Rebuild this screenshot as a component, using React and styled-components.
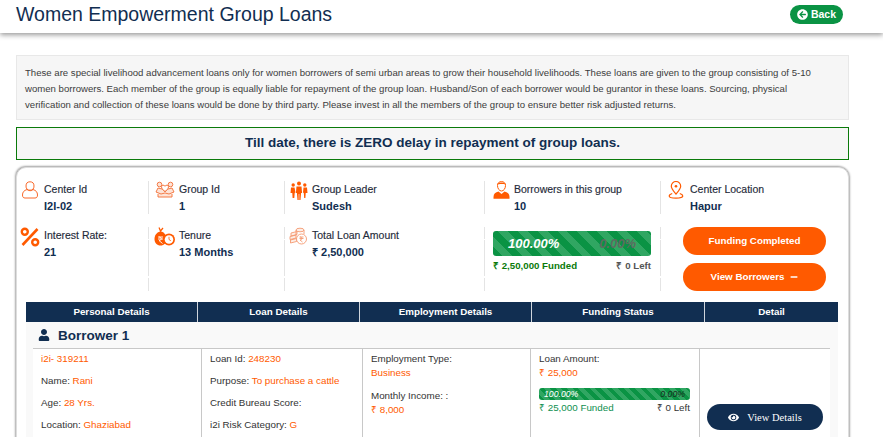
import React from 'react';
import styled, { createGlobalStyle } from 'styled-components';
import { FaArrowCircleLeft, FaUser, FaEye, FaMinus } from 'react-icons/fa';

const navy = '#112e51';
const orange = '#ff5a00';
const font = '"Liberation Sans", Arial, sans-serif';

const GlobalStyle = createGlobalStyle`
  html, body {
    margin: 0;
    height: 437px;
    overflow: hidden;
    background: #fff;
    font-family: ${font};
  }
`;

const Header = styled.header`
  display: flex;
  align-items: center;
  justify-content: space-between;
  height: 33px;
  padding: 0 40px 0 16px;
  background: #fff;
  box-shadow: 0 2px 5px rgba(0, 0, 0, 0.4);
`;
const Title = styled.h1`
  margin: 0 0 5px;
  font-size: 19.5px;
  font-weight: 400;
  color: ${navy};
  line-height: 28px;
`;
const BackButton = styled.a`
  display: flex;
  align-items: center;
  justify-content: center;
  gap: 3px;
  width: 53px;
  height: 19px;
  margin-bottom: 5px;
  border-radius: 10px;
  background: #0a9344;
  color: #fff;
  font-size: 10.5px;
  font-weight: 700;
`;
const Main = styled.main`
  padding: 22px 34px 0 16px;
`;
const Intro = styled.p`
  margin: 0;
  height: 65px;
  box-sizing: border-box;
  padding: 9px 16px 9px 8px;
  border: 1px solid #e8e8e8;
  background: #f6f6f6;
  color: #3c3c3c;
  font-size: 9.6px;
  line-height: 16px;
`;
const Notice = styled.div`
  margin-top: 7px;
  height: 33px;
  box-sizing: border-box;
  border: 1px solid #0a7a0a;
  background: #f6f6f6;
  color: ${navy};
  font-size: 13.5px;
  font-weight: 700;
  line-height: 30px;
  text-align: center;
`;
const Card = styled.section`
  margin-top: 7px;
  padding: 13px 10px 0;
  height: 300px;
  border: 1px solid #ddd;
  border-radius: 10px;
  background: #fff;
  box-shadow: -1px -1px 2px #aaa, 1px 0 2px #aaa;
`;
const InfoGrid = styled.div`
  display: grid;
  grid-template-columns: 132px 136px 200px 176px 1fr;
  grid-template-rows: 33px 64px;
  row-gap: 13px;
  margin-left: -10px;
`;
const sepGaps = `
  border-right: 1px solid #e4e4e4;
  border-image: linear-gradient(
    #e4e4e4 0 13px, transparent 13px 14px,
    #e4e4e4 14px 48px, transparent 48px 50px,
    #e4e4e4 50px
  ) 1;
`;
const Info = styled.div`
  display: flex;
  padding-left: ${p => p.$pad}px;
  border-right: ${p => (p.$last ? 'none' : '1px solid #e4e4e4')};
  ${p => (p.$gaps ? sepGaps : '')}
`;
const IconBox = styled.span`
  flex: none;
  width: ${p => p.$w}px;
  height: 24px;
  display: flex;
  align-items: flex-start;
`;
const InfoText = styled.div`
  padding-top: 1px;
`;
const InfoLabel = styled.div`
  font-size: 10.5px;
  line-height: 14px;
  color: #1f2b3a;
  -webkit-text-stroke: 0.15px #1f2b3a;
`;
const InfoValue = styled.div`
  margin-top: 3px;
  font-size: 11px;
  line-height: 14px;
  font-weight: 700;
  color: ${navy};
`;
const FundCell = styled.div`
  padding: 4px 9px 0 8px;
  ${sepGaps}
`;
const Bar = styled.div`
  display: flex;
  align-items: center;
  justify-content: space-between;
  height: ${p => p.$h}px;
  border-radius: ${p => p.$r}px;
  padding: 0 ${p => p.$pad}px;
  font-style: italic;
  background: repeating-linear-gradient(
    45deg,
    #0a9344 0,
    #0a9344 ${p => p.$stripe}px,
    #30a662 ${p => p.$stripe}px,
    #30a662 ${p => p.$stripe * 2}px
  );
`;
const BigPct = styled.span`
  font-size: 13px;
  font-weight: 700;
  color: ${p => (p.$dark ? '#5d6b60' : '#fff')};
`;
const FundRow = styled.div`
  display: flex;
  justify-content: space-between;
  margin-top: 4px;
  font-size: 9.7px;
  line-height: 12px;
  font-weight: 700;
`;
const Funded = styled.span`
  color: ${p => (p.$mini ? '#0f8f50' : '#0a7a0a')};
`;
const Left = styled.span`
  color: #555;
`;
const Actions = styled.div`
  display: flex;
  flex-direction: column;
  gap: 8px;
  padding-left: 22px;
`;
const PillButton = styled.button`
  display: flex;
  align-items: center;
  justify-content: center;
  gap: 6px;
  width: 143px;
  height: 28px;
  padding: 0 0 1px;
  border: none;
  border-radius: 14px;
  background: ${orange};
  color: #fff;
  font-family: ${font};
  font-size: 9.8px;
  font-weight: 700;
`;
const TableHead = styled.div`
  display: grid;
  grid-template-columns: 172px 162px 172px 173px 1fr;
  height: 20px;
  margin: 11px 0 0 -1px;
  background: ${navy};
`;
const HeadCell = styled.div`
  border-right: ${p => (p.$last ? 'none' : '1px solid #cfd5dc')};
  color: #fff;
  font-size: 9.8px;
  font-weight: 700;
  line-height: 20px;
  text-align: center;
`;
const Borrower = styled.div`
  margin-left: -1px;
  background: #f9f9f9;
  padding: 0 8px 0 7px;
`;
const BorrowerTitle = styled.h3`
  display: flex;
  align-items: center;
  gap: 8px;
  margin: 0;
  height: 26px;
  padding-left: 5px;
  border-bottom: 1px solid #c8c8c8;
  color: ${navy};
  font-size: 13.5px;
  font-weight: 700;
`;
const Rows = styled.div`
  display: grid;
  grid-template-columns: 169px 161px 168px 169px 1fr;
  background: #fff;
`;
const Col = styled.div`
  height: 100px;
  box-sizing: border-box;
  padding: ${p => p.$pad || '3px 0 0 8px'};
  border-right: ${p => (p.$last ? 'none' : '1px solid #c8c8c8')};
  font-size: 9.8px;
  color: #333;
`;
const Line = styled.div`
  line-height: 13px;
  margin-bottom: ${p => p.$gap ?? 9}px;
`;
const Val = styled.span`
  color: ${orange};
`;
const MiniPct = styled.span`
  font-size: 8.7px;
  color: ${p => (p.$dark ? '#1c2b20' : '#fff')};
`;
const MiniFund = styled.div`
  display: flex;
  justify-content: space-between;
  font-size: 9.8px;
  line-height: 13px;
  margin-top: 1px;
`;
const DetailButton = styled.button`
  display: flex;
  align-items: center;
  justify-content: center;
  gap: 8px;
  width: 116px;
  height: 26px;
  margin: 55px 0 0 7px;
  padding: 0;
  border: none;
  border-radius: 13px;
  background: ${navy};
  color: #fff;
  font-family: "Liberation Serif", serif;
  font-size: 10.5px;
`;

const UserIcon = () => (
  <svg width="18" height="18" viewBox="0 0 18 18" fill="none" stroke="#f9692a" strokeWidth="1">
    <ellipse cx="9" cy="5" rx="4" ry="4.200" />
    <path d="M6 8.500C3 9.500 1.500 11 1.500 14c0 2 .8 3 2.500 3h10c1.700 0 2.500-1 2.500-3 0-3-1.500-4.500-4.500-5.500-1 1.600-4.500 1.600-6 0z" />
  </svg>
);
const CoupleIcon = () => (
  <svg width="20" height="17" viewBox="0 0 20 17" fill="#fde4d8" stroke="#f47a45" strokeWidth="1">
    <circle cx="4.500" cy="3.500" r="2.300" />
    <circle cx="15.500" cy="3.500" r="2.300" />
    <path d="M1 11l2-4 4 1 3 3 3-3 4-1 2 4-5 2-4-1-4 1zM3 13v3h14v-3" />
    <path d="M10 10.500C8 9 6.500 7.500 6.500 5.800c0-1.800 2.500-2.300 3.500-.5 1-1.800 3.500-1.300 3.500.5 0 1.700-1.500 3.200-3.500 4.700z" fill="#fff" />
  </svg>
);
const GroupIcon = () => (
  <svg width="18" height="19" viewBox="0 0 18 19" fill={orange}>
    <circle cx="9" cy="2.500" r="2" />
    <circle cx="3.200" cy="4" r="1.700" />
    <circle cx="14.800" cy="4" r="1.700" />
    <path d="M6.500 5.500h5l.6 6.500h-1l-.6 7H9.300V13h-.6v6H7.500l-.6-7h-1z" />
    <path d="M1 6.500h3.500l1 5-.8.5-.4 5H2.600l-.3-5H.5zM13.500 6.500H17l.5 5.500h-1.800l-.3 5h-1.200l-.4-5-.8-.5z" />
  </svg>
);
const LeaderIcon = () => (
  <svg width="17" height="18" viewBox="0 0 17 18" fill={orange}>
    <path d="M4.500 4.500C4.500 1.800 6.300.6 8.500.6s4 1.200 4 3.900c0 3-1.800 5.500-4 5.500s-4-2.500-4-5.500z" fill="#fff" stroke={orange} strokeWidth="1" />
    <path d="M4 3.500C5 .8 12 .8 13 3.500c-2-.8-7-.8-9 0z" />
    <path d="M5.500 10.500L8.500 13l3-2.500c3 .7 5 2.200 5 5.500v1.700H.5V16c0-3.300 2-4.800 5-5.500z" />
  </svg>
);
const PinIcon = () => (
  <svg width="16" height="18" viewBox="0 0 16 18" fill="none" stroke={orange} strokeWidth="1.200">
    <path d="M8 13C5.500 10 3.300 7.700 3.300 5.200a4.700 4.700 0 0 1 9.400 0C12.700 7.700 10.500 10 8 13z" />
    <circle cx="8" cy="5.200" r="1.300" fill={orange} stroke="none" />
    <path d="M4.200 12.500C2.200 13.200 1.200 14 1.200 15c0 1.300 3 2.200 6.800 2.200s6.800-.9 6.800-2.200c0-1-1-1.800-3-2.500" />
  </svg>
);
const PercentIcon = () => (
  <svg width="20" height="20" viewBox="0 0 20 20" fill="none" stroke={orange} strokeWidth="2.400">
    <circle cx="4.800" cy="4.800" r="3" />
    <circle cx="15.200" cy="15.200" r="3" />
    <path d="M17.500 2L2.500 18" strokeWidth="2.600" />
  </svg>
);
const TenureIcon = () => (
  <svg width="22" height="20" viewBox="0 0 22 20">
    <path d="M6 4.500c-3.500 1-5.500 4-5.500 7.500 0 4 2.500 6.500 6 6.500s6-2.500 6-6.500c0-3.500-2-6.500-5-7.500z" fill={orange} />
    <path d="M5 .5l1.500 3.500L9 1" fill="none" stroke={orange} strokeWidth="1.200" />
    <circle cx="15" cy="12.500" r="6" fill={orange} />
    <circle cx="15" cy="12.500" r="4.300" fill="#fff" />
    <path d="M15 9.800v2.700l1.800 1.200" stroke={orange} strokeWidth="0.800" fill="none" />
    <path d="M4 10h5M4 12h5M5 10c3 0 3 3.500 0 3.500L8.500 16.500" stroke="#fff" strokeWidth="0.900" fill="none" />
  </svg>
);
const CoinsIcon = () => (
  <svg width="19" height="18" viewBox="0 0 19 18" fill="#fdeee6" stroke="#f59a72" strokeWidth="0.900">
    <path d="M2 6l6-1.500v3L2 9zM1 9.500l6-1.500v3l-6 1.500zM1.500 13l6-1.500v3l-6 1.500z" />
    <ellipse cx="11" cy="3" rx="4" ry="1.800" />
    <path d="M7 3v5M15 3v4" />
    <circle cx="12.500" cy="12" r="5" fill="#fff" />
    <path d="M10.500 10h4M10.500 11.500h4M11 10c2.500 0 2.500 3 0 3l2.500 2" fill="none" />
  </svg>
);

const infoTop = [
  { icon: <UserIcon />, label: 'Center Id', value: 'I2I-02', pad: 4, w: 23 },
  { icon: <CoupleIcon />, label: 'Group Id', value: '1', pad: 6, w: 24 },
  { icon: <GroupIcon />, label: 'Group Leader', value: 'Sudesh', pad: 5, w: 22 },
  { icon: <LeaderIcon />, label: 'Borrowers in this group', value: '10', pad: 8, w: 21 },
  { icon: <PinIcon />, label: 'Center Location', value: 'Hapur', pad: 7, w: 22, last: true },
];
const infoBottom = [
  { icon: <PercentIcon />, label: 'Interest Rate:', value: '21', pad: 3, w: 24, gaps: true },
  { icon: <TenureIcon />, label: 'Tenure', value: '13 Months', pad: 5, w: 25, gaps: true },
  { icon: <CoinsIcon />, label: 'Total Loan Amount', value: '₹ 2,50,000', pad: 4, w: 23, gaps: true },
];

const InfoItem = ({ icon, label, value, pad, w, last, gaps }) => (
  <Info $pad={pad} $last={last} $gaps={gaps}>
    <IconBox $w={w}>{icon}</IconBox>
    <InfoText>
      <InfoLabel>{label}</InfoLabel>
      <InfoValue>{value}</InfoValue>
    </InfoText>
  </Info>
);

export default function App() {
  return (
    <>
      <GlobalStyle />
      <Header>
        <Title>Women Empowerment Group Loans</Title>
        <BackButton><FaArrowCircleLeft size={11} /> Back</BackButton>
      </Header>
      <Main>
        <Intro>
          These are special livelihood advancement loans only for women borrowers of semi urban areas to grow their household livelihoods. These loans are given to the group consisting of 5-10 women borrowers. Each member of the group is equally liable for repayment of the group loan. Husband/Son of each borrower would be gurantor in these loans. Sourcing, physical verification and collection of these loans would be done by third party. Please invest in all the members of the group to ensure better risk adjusted returns.
        </Intro>
        <Notice>Till date, there is ZERO delay in repayment of group loans.</Notice>
        <Card>
          <InfoGrid>
            {infoTop.map(item => <InfoItem key={item.label} {...item} />)}
            {infoBottom.map(item => <InfoItem key={item.label} {...item} />)}
            <FundCell>
              <Bar $h={25} $r={3} $pad={15} $stripe={7}>
                <BigPct>100.00%</BigPct>
                <BigPct $dark>0.00%</BigPct>
              </Bar>
              <FundRow>
                <Funded>₹ 2,50,000 Funded</Funded>
                <Left>₹ 0 Left</Left>
              </FundRow>
            </FundCell>
            <Actions>
              <PillButton>Funding Completed</PillButton>
              <PillButton>View Borrowers <FaMinus size={8} /></PillButton>
            </Actions>
          </InfoGrid>
          <TableHead>
            <HeadCell>Personal Details</HeadCell>
            <HeadCell>Loan Details</HeadCell>
            <HeadCell>Employment Details</HeadCell>
            <HeadCell>Funding Status</HeadCell>
            <HeadCell $last>Detail</HeadCell>
          </TableHead>
          <Borrower>
            <BorrowerTitle><FaUser size={12} /> Borrower 1</BorrowerTitle>
            <Rows>
              <Col>
                <Line><Val>i2i- 319211</Val></Line>
                <Line>Name: <Val>Rani</Val></Line>
                <Line>Age: <Val>28 Yrs.</Val></Line>
                <Line>Location: <Val>Ghaziabad</Val></Line>
              </Col>
              <Col>
                <Line>Loan Id: <Val>248230</Val></Line>
                <Line>Purpose: <Val>To purchase a cattle</Val></Line>
                <Line>Credit Bureau Score:</Line>
                <Line>i2i Risk Category: <Val>G</Val></Line>
              </Col>
              <Col>
                <Line $gap={1}>Employment Type:</Line>
                <Line $gap={10}><Val>Business</Val></Line>
                <Line $gap={1}>Monthly Income: :</Line>
                <Line><Val>₹ 8,000</Val></Line>
              </Col>
              <Col $pad="3px 9px 0 8px">
                <Line $gap={1}>Loan Amount:</Line>
                <Line $gap={9}><Val>₹ 25,000</Val></Line>
                <Bar $h={12} $r={3} $pad={5} $stripe={4}>
                  <MiniPct>100.00%</MiniPct>
                  <MiniPct $dark>0.00%</MiniPct>
                </Bar>
                <MiniFund>
                  <Funded $mini>₹ 25,000 Funded</Funded>
                  <span>₹ 0 Left</span>
                </MiniFund>
              </Col>
              <Col $last $pad="0">
                <DetailButton><FaEye size={11} /> View Details</DetailButton>
              </Col>
            </Rows>
          </Borrower>
        </Card>
      </Main>
    </>
  );
}
